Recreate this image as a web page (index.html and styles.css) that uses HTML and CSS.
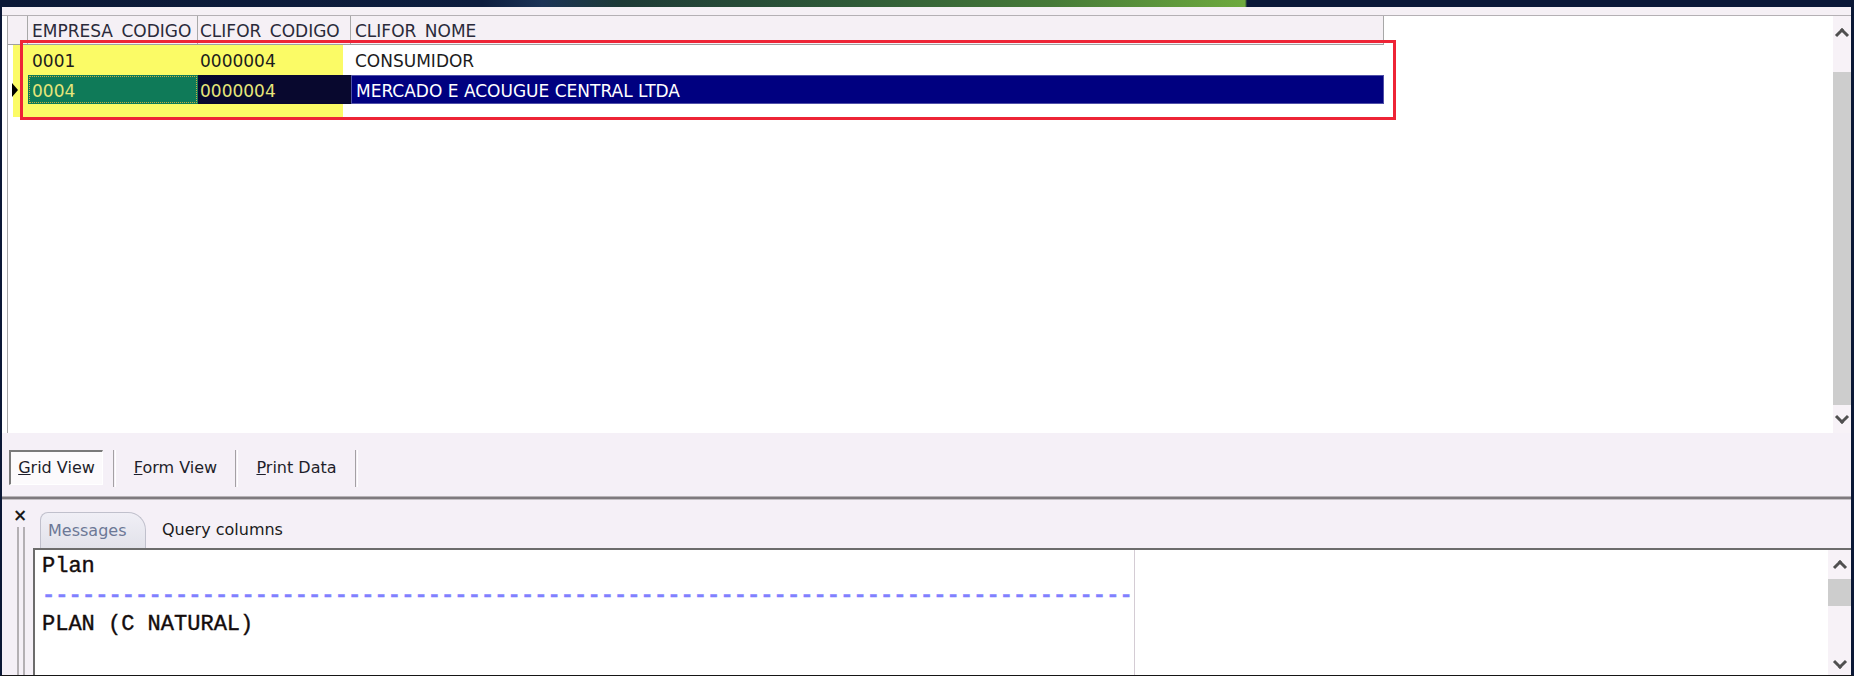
FILE: index.html
```html
<!DOCTYPE html>
<html lang="pt">
<head>
    <meta charset="UTF-8">
    <meta name="viewport" content="width=device-width, initial-scale=1.0">
    <title>Consulta - Grid View</title>
    <link rel="stylesheet" href="styles.css">
</head>
<body>
    <div class="window">
        <div class="progress-band"></div>
        <div class="toolbar-strip"></div>

        <div class="grid-area">
            <div class="grid">
                <div class="grid-header">
                    <div class="cell indicator"></div>
                    <div class="cell col-empresa">EMPRESA_CODIGO</div>
                    <div class="cell col-clifor">CLIFOR_CODIGO</div>
                    <div class="cell col-nome">CLIFOR_NOME</div>
                </div>
                <div class="grid-row">
                    <div class="cell indicator"></div>
                    <div class="cell col-empresa">0001</div>
                    <div class="cell col-clifor">0000004</div>
                    <div class="cell col-nome">CONSUMIDOR</div>
                </div>
                <div class="grid-row current">
                    <div class="cell indicator"><span class="row-arrow"></span></div>
                    <div class="cell col-empresa">0004</div>
                    <div class="cell col-clifor">0000004</div>
                    <div class="cell col-nome">MERCADO E ACOUGUE CENTRAL LTDA</div>
                </div>
                <div class="mark-yellow"></div>
                <div class="mark-red"></div>
            </div>
            <div class="vscroll">
                <div class="scroll-btn btn-up"><span class="chevron up"></span></div>
                <div class="scroll-gap"></div>
                <div class="scroll-thumb big"></div>
                <div class="scroll-btn btn-down"><span class="chevron down"></span></div>
            </div>
        </div>

        <div class="view-tabs">
            <div class="view-btn active"><u>G</u>rid View</div>
            <div class="view-sep"></div>
            <div class="view-btn form"><u>F</u>orm View</div>
            <div class="view-sep"></div>
            <div class="view-btn print"><u>P</u>rint Data</div>
            <div class="view-sep"></div>
        </div>

        <div class="splitter"></div>

        <div class="bottom-panel">
            <div class="grip">
                <div class="close-x">&#215;</div>
                <div class="grip-lines"></div>
            </div>
            <div class="bottom-main">
                <div class="msg-tabs">
                    <div class="msg-tab selected">Messages</div>
                    <div class="msg-tab">Query columns</div>
                </div>
                <div class="msg-box">
                    <div class="msg-text">
                        <div class="msg-line">Plan</div>
                        <div class="msg-line dashes">----------------------------------------------------------------------------------</div>
                        <div class="msg-line">PLAN (C NATURAL)</div>
                    </div>
                    <div class="msg-empty"></div>
                    <div class="vscroll small">
                        <div class="scroll-btn btn-up-s"><span class="chevron up"></span></div>
                        <div class="scroll-thumb small-thumb"></div>
                        <div class="scroll-fill"></div>
                        <div class="scroll-btn btn-down-s"><span class="chevron down"></span></div>
                    </div>
                </div>
            </div>
        </div>
    </div>
</body>
</html>
```

FILE: styles.css
```css
body {
    margin: 0;
    width: 1854px;
    height: 676px;
    overflow: hidden;
    background-color: #f5f0f6;
    font-family: "DejaVu Sans", sans-serif;
    color: #1c1c1c;
}
.window {
    display: flex;
    flex-direction: column;
    height: 676px;
    box-sizing: border-box;
    border-left: 2px solid #0b1836;
    border-right: 3px solid #0b1836;
    border-bottom: 1px solid #161616;
}
.progress-band {
    height: 7px;
    background: linear-gradient(90deg, #0b1836 0, #0d1d3e 480px, #1b3356 540px, #1d3a36 620px, #2f5a38 850px, #467a38 1050px, #6eaa3e 1243px, #0a1838 1245px, #0a1838 100%);
}
.toolbar-strip {
    height: 8px;
    background-color: #f5f0f5;
    border-bottom: 1px solid #b4b0b4;
}

/* data grid */
.grid-area {
    display: flex;
    height: 417px;
    background-color: #ffffff;
}
.grid {
    flex: 1;
    position: relative;
    margin-left: 5px;
    border-left: 1px solid #a8a8a8;
    background-color: #ffffff;
}
.grid-header,
.grid-row {
    position: relative;
    z-index: 1;
    display: flex;
    width: 1376px;
    font-size: 17px;
}
.grid-header {
    height: 29px;
    box-sizing: border-box;
    border-bottom: 1px solid #a0a0a0;
}
.grid-header .cell {
    background-color: #f5f0f5;
    border-right: 1px solid #a8a8a8;
    padding-top: 3px;
    line-height: 25px;
    color: #2a2a3a;
}
.grid-row {
    height: 30px;
    box-sizing: border-box;
    border-bottom: 1px solid transparent;
}
.grid-row .cell {
    padding-top: 4px;
    line-height: 25px;
}
.cell {
    box-sizing: border-box;
    padding-left: 4px;
    overflow: hidden;
    white-space: nowrap;
}
.indicator {
    width: 20px;
    padding-left: 0;
}
.col-empresa {
    width: 170px;
}
.col-clifor {
    width: 153px;
    padding-left: 2px;
}
.col-nome {
    width: 1033px;
}
.grid-row .indicator {
    display: flex;
    align-items: center;
    padding-top: 0;
}
.row-arrow {
    margin-left: 4px;
    border-left: 6px solid #000000;
    border-top: 7px solid transparent;
    border-bottom: 7px solid transparent;
}
.current .col-empresa {
    background-color: #0f7a58;
    color: #e6e67a;
    outline: 1px dotted #c8b040;
    outline-offset: -2px;
}
.current .col-clifor {
    background-color: #08082e;
    color: #e6e67a;
}
.current .col-nome {
    background-color: #000080;
    color: #ffffff;
    border: 1px solid #5050a8;
    padding-top: 3px;
}
.mark-yellow {
    position: absolute;
    left: 5px;
    top: 28px;
    width: 330px;
    height: 73px;
    background-color: #fbfb66;
    z-index: 0;
}
.mark-red {
    position: absolute;
    left: 12px;
    top: 24px;
    width: 1376px;
    height: 80px;
    box-sizing: border-box;
    border: 3px solid #ee2436;
    z-index: 2;
    pointer-events: none;
}

/* scroll bars */
.vscroll {
    display: flex;
    flex-direction: column;
    width: 18px;
    background-color: #f7f2f7;
}
.scroll-btn {
    display: flex;
    justify-content: center;
    align-items: center;
}
.chevron {
    display: block;
    width: 7px;
    height: 7px;
    border-top: 3px solid #505050;
    border-left: 3px solid #505050;
}
.chevron.up {
    transform: translateY(2px) rotate(45deg);
}
.chevron.down {
    transform: translateY(-2px) rotate(225deg);
}
.btn-up {
    height: 34px;
}
.scroll-gap {
    height: 22px;
}
.scroll-thumb {
    background-color: #cdcdcd;
}
.scroll-thumb.big {
    height: 333px;
}
.btn-down {
    flex: 1;
}

/* view switch bar */
.view-tabs {
    display: flex;
    align-items: flex-start;
    height: 63px;
    box-sizing: border-box;
    padding: 17px 0 0 7px;
    background-color: #f5f0f7;
    font-size: 16px;
}
.view-btn {
    height: 35px;
    line-height: 35px;
    text-align: center;
    color: #1e1e2a;
    box-sizing: border-box;
}
.view-btn.active {
    width: 94px;
    border-top: 2px solid #7a7a7a;
    border-left: 2px solid #7a7a7a;
    border-bottom: 1px solid #ffffff;
    border-right: 1px solid #ffffff;
    background-color: #fcfafc;
    line-height: 32px;
    margin-right: 10px;
}
.view-btn.form {
    width: 119px;
}
.view-btn.print {
    width: 117px;
}
.view-sep {
    width: 1px;
    height: 37px;
    border-left: 1px solid #a4a0a4;
    border-right: 1px solid #ffffff;
}
.splitter {
    height: 2px;
    border-top: 1px solid #b8b4b8;
    border-bottom: 1px solid #c4c0c4;
    background-color: #7e7a7e;
}

/* messages panel */
.bottom-panel {
    display: flex;
    flex: 1;
    min-height: 0;
    background-color: #f5f0f7;
}
.grip {
    display: flex;
    flex-direction: column;
    width: 31px;
}
.close-x {
    margin: 8px 0 0 11px;
    width: 14px;
    height: 14px;
    line-height: 14px;
    text-align: center;
    font-size: 17px;
    font-weight: bold;
    color: #1a1a1a;
}
.grip-lines {
    flex: 1;
    margin: 5px 0 0 15px;
    width: 8px;
    box-sizing: border-box;
    border-left: 2px solid #b4b0b4;
    border-right: 2px solid #b4b0b4;
}
.bottom-main {
    display: flex;
    flex-direction: column;
    flex: 1;
}
.msg-tabs {
    display: flex;
    align-items: flex-end;
    height: 48px;
    font-size: 16px;
}
.msg-tab {
    height: 36px;
    line-height: 36px;
    box-sizing: border-box;
}
.msg-tab.selected {
    width: 106px;
    margin-left: 7px;
    padding-left: 7px;
    color: #6c7896;
    background: linear-gradient(#f0eff6, #e2e2ea);
    border: 1px solid #c0c0cc;
    border-bottom: none;
    border-radius: 8px 18px 0 0;
}
.msg-tab + .msg-tab {
    margin-left: 16px;
    color: #1a1a1a;
}
.msg-box {
    display: flex;
    flex: 1;
    min-height: 0;
    border-top: 2px solid #6c6c6c;
    border-left: 2px solid #6c6c6c;
    background-color: #ffffff;
}
.msg-text {
    width: 1100px;
    box-sizing: border-box;
    padding: 2px 0 0 7px;
    border-right: 1px solid #d4ccd4;
    overflow: hidden;
    font-family: "Liberation Mono", monospace;
    font-size: 22px;
    line-height: 29px;
    color: #140c0c;
    -webkit-text-stroke: 0.4px #140c0c;
}
.msg-line {
    white-space: nowrap;
}
.msg-line.dashes {
    color: #8080ff;
    -webkit-text-stroke: 0.4px #8080ff;
    font-weight: bold;
    letter-spacing: 0.1px;
}
.msg-empty {
    flex: 1;
}
.vscroll.small {
    width: 23px;
}
.btn-up-s {
    height: 29px;
}
.small-thumb {
    height: 27px;
}
.scroll-fill {
    flex: 1;
}
.btn-down-s {
    height: 22px;
}
```
